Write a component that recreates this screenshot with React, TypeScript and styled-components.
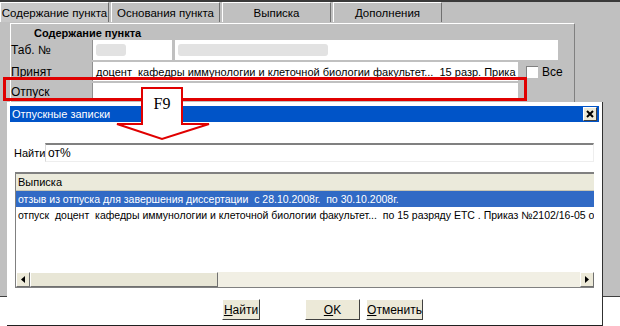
import styled, { createGlobalStyle } from "styled-components";

const GlobalStyle = createGlobalStyle`
  html, body {
    margin: 0;
    padding: 0;
    background: #ffffff;
  }
  body {
    font-family: "Liberation Sans", Arial, sans-serif;
    font-size: 11px;
    color: #000;
  }
`;

const Screen = styled.div`
  position: relative;
  width: 620px;
  height: 326px;
  overflow: hidden;
`;

const Window = styled.div`
  height: 294px;
  background: #c0c0c0;
  border-top: 2px solid #3a3a3a;
  border-bottom: 1px solid #404040;
  display: flex;
  flex-direction: column;
`;

const TabBar = styled.div`
  display: flex;
  height: 20px;
  gap: 2px;
`;

const Tab = styled.div<{ $active?: boolean }>`
  width: 109px;
  height: 20px;
  box-sizing: border-box;
  display: flex;
  align-items: center;
  justify-content: center;
  background: ${(p) => (p.$active ? "#c8c8c8" : "#c0c0c0")};
  border-top: 1px solid #ffffff;
  border-left: 1px solid #ffffff;
  border-right: 1px solid #707070;
  font-size: 11.5px;
  white-space: nowrap;
`;

const Panel = styled.div`
  margin: 1px 45px 0 10px;
  border-top: 1px solid #ffffff;
  border-left: 1px solid #ffffff;
  border-right: 1px solid #808080;
  flex: 1;
  display: flex;
  flex-direction: column;
`;

const SectionTitle = styled.div`
  font-weight: bold;
  font-size: 11px;
  padding-left: 23px;
  height: 13px;
  line-height: 13px;
  margin-top: 3px;
`;

const Form = styled.div`
  display: grid;
  grid-template-columns: 82px 1fr;
  row-gap: 2px;
  width: 547px;
`;

const Label = styled.div<{ $h: number }>`
  height: ${(p) => p.$h}px;
  display: flex;
  align-items: center;
  font-size: 12px;
  border-right: 1px solid #909090;
`;

const Inputs = styled.div`
  display: flex;
  align-items: center;
  gap: 3px;
`;

const Field = styled.div<{ $w: number; $h: number }>`
  width: ${(p) => p.$w}px;
  height: ${(p) => p.$h}px;
  box-sizing: border-box;
  background: #ffffff;
  display: flex;
  align-items: center;
  padding-left: 3px;
  white-space: nowrap;
  overflow: hidden;
  font-size: 11px;
`;

const Blur = styled.div<{ $w: number }>`
  width: ${(p) => p.$w}px;
  height: 12px;
  border-radius: 3px;
  background: #e2e2e2;
`;

const Check = styled.div`
  width: 11px;
  height: 11px;
  background: #ffffff;
  border-top: 1px solid #808080;
  border-left: 1px solid #808080;
  margin-left: 5px;
`;

const CheckLabel = styled.span`
  font-size: 12px;
  margin-left: 1px;
`;

const Highlight = styled.div`
  position: absolute;
  left: 3px;
  top: 77px;
  width: 518px;
  height: 18px;
  border: 3px solid #e00000;
`;

const Dialog = styled.div`
  position: absolute;
  left: 7px;
  top: 102px;
  width: 589px;
  height: 219px;
  background: #ffffff;
  border-right: 1px solid #303030;
  border-bottom: 2px solid #202020;
  display: flex;
  flex-direction: column;
  padding: 4px 3px 0;
  box-sizing: content-box;
`;

const TitleBar = styled.div`
  height: 16px;
  background: #0054c8;
  color: #ffffff;
  display: flex;
  align-items: center;
  justify-content: space-between;
  padding-left: 2px;
  font-size: 11px;
`;

const CloseBtn = styled.div`
  width: 12px;
  height: 12px;
  margin-right: 2px;
  background: #ece9d8;
  border: 1px solid #ffffff;
  border-right-color: #404040;
  border-bottom-color: #404040;
  display: flex;
  align-items: center;
  justify-content: center;
`;

const FindRow = styled.div`
  margin-top: 21px;
  display: flex;
  align-items: center;
  height: 19px;
  padding-left: 4px;
`;

const FindLabel = styled.span`
  font-size: 11px;
  width: 31px;
`;

const FindInput = styled.div`
  flex: 1;
  margin-right: 5px;
  height: 19px;
  box-sizing: border-box;
  border-top: 2px solid #808080;
  border-left: 1px solid #d8d8d8;
  border-right: 1px solid #eeeeee;
  border-bottom: 1px solid #eeeeee;
  display: flex;
  align-items: center;
  padding-left: 2px;
  font-size: 12px;
`;

const Grid = styled.div`
  margin: 10px 5px 0 5px;
  height: 116px;
  box-sizing: border-box;
  border-top: 2px solid #808080;
  border-left: 1px solid #808080;
  display: flex;
  flex-direction: column;
`;

const GridHeader = styled.div`
  height: 16px;
  background: #ebeadb;
  display: flex;
  align-items: center;
  padding-left: 2px;
  font-size: 11px;
  border-bottom: 1px solid #c8c6b4;
`;

const GridRow = styled.div<{ $selected?: boolean }>`
  height: 16px;
  display: flex;
  align-items: center;
  padding-left: 2px;
  white-space: nowrap;
  overflow: hidden;
  font-size: 10.5px;
  background: ${(p) => (p.$selected ? "#316ac5" : "transparent")};
  color: ${(p) => (p.$selected ? "#ffffff" : "#000000")};
`;

const GridBody = styled.div`
  flex: 1;
`;

const ScrollBar = styled.div`
  height: 15px;
  background: #f1efe4;
  display: flex;
  align-items: stretch;
  border-bottom: 1px solid #808080;
`;

const ScrollBtn = styled.div`
  width: 14px;
  background: #ece9d8;
  border: 1px solid #ffffff;
  border-right-color: #707070;
  border-bottom-color: #707070;
  box-sizing: border-box;
  display: flex;
  align-items: center;
  justify-content: center;
`;

const Thumb = styled.div`
  width: 188px;
  background: #e8e6d6;
  border: 1px solid #ffffff;
  border-right-color: #707070;
  border-bottom-color: #707070;
  box-sizing: border-box;
`;

const Track = styled.div`
  flex: 1;
`;

const Buttons = styled.div`
  display: flex;
  margin-top: 11px;
  padding-left: 212px;
`;

const Button = styled.div<{ $w: number; $gap?: number }>`
  width: ${(p) => p.$w}px;
  height: 21px;
  box-sizing: border-box;
  margin-left: ${(p) => p.$gap ?? 0}px;
  background: #ece9d8;
  border: 1px solid #ffffff;
  border-right-color: #404040;
  border-bottom-color: #404040;
  display: flex;
  align-items: center;
  justify-content: center;
  font-size: 12px;
`;

const Arrow = styled.svg`
  position: absolute;
  left: 114px;
  top: 86px;
`;

function App() {
  return (
    <Screen>
      <GlobalStyle />
      <Window>
        <TabBar>
          <Tab $active>Содержание пункта</Tab>
          <Tab>Основания пункта</Tab>
          <Tab>Выписка</Tab>
          <Tab>Дополнения</Tab>
        </TabBar>
        <Panel>
          <SectionTitle>Содержание пункта</SectionTitle>
          <Form>
            <Label $h={20}>Таб. №</Label>
            <Inputs>
              <Field $w={79} $h={20}>
                <Blur $w={30} />
              </Field>
              <Field $w={383} $h={20}>
                <Blur $w={150} />
              </Field>
            </Inputs>
            <Label $h={19}>Принят</Label>
            <Inputs>
              <Field $w={425} $h={19}>
                доцент&nbsp; кафедры иммунологии и клеточной биологии факультет...&nbsp; 15 разр. Прика
              </Field>
              <Check />
              <CheckLabel>Все</CheckLabel>
            </Inputs>
            <Label $h={18}>Отпуск</Label>
            <Inputs>
              <Field $w={425} $h={18} />
            </Inputs>
          </Form>
        </Panel>
      </Window>
      <Highlight />
      <Dialog>
        <TitleBar>
          Отпускные записки
          <CloseBtn>
            <svg width="8" height="8" viewBox="0 0 8 8">
              <path d="M1 1 L7 7 M7 1 L1 7" stroke="#000" strokeWidth="2" />
            </svg>
          </CloseBtn>
        </TitleBar>
        <FindRow>
          <FindLabel>Найти</FindLabel>
          <FindInput>от%</FindInput>
        </FindRow>
        <Grid>
          <GridHeader>Выписка</GridHeader>
          <GridRow $selected>
            отзыв из отпуска для завершения диссертации&nbsp; с 28.10.2008г.&nbsp; по 30.10.2008г.
          </GridRow>
          <GridRow>
            отпуск&nbsp; доцент&nbsp; кафедры иммунологии и клеточной биологии факультет...&nbsp; по 15 разряду ЕТС . Приказ №2102/16-05 о
          </GridRow>
          <GridBody />
          <ScrollBar>
            <ScrollBtn>
              <svg width="4" height="7" viewBox="0 0 4 7">
                <path d="M4 0 L0 3.5 L4 7 Z" fill="#000" />
              </svg>
            </ScrollBtn>
            <Thumb />
            <Track />
            <ScrollBtn>
              <svg width="4" height="7" viewBox="0 0 4 7">
                <path d="M0 0 L4 3.5 L0 7 Z" fill="#000" />
              </svg>
            </ScrollBtn>
          </ScrollBar>
        </Grid>
        <Buttons>
          <Button $w={38}>
            <span><u>Н</u>айти</span>
          </Button>
          <Button $w={55} $gap={45}>
            <span><u>O</u>K</span>
          </Button>
          <Button $w={57} $gap={6}>
            <span><u>О</u>тменить</span>
          </Button>
        </Buttons>
      </Dialog>
      <Arrow width="100" height="56" viewBox="0 0 100 56">
        <polygon
          points="28,2 68,2 68,38 95,38 48,53 3,38 28,38"
          fill="#ffffff"
          stroke="#e00000"
          strokeWidth="2"
        />
        <text
          x="48"
          y="23"
          textAnchor="middle"
          fontFamily="'Liberation Serif', serif"
          fontSize="16"
          fontWeight="normal"
          fill="#000"
        >
          F9
        </text>
      </Arrow>
    </Screen>
  );
}

export default App;
